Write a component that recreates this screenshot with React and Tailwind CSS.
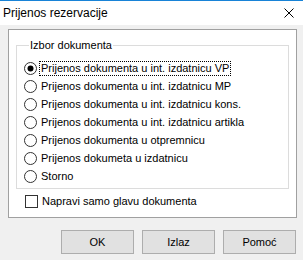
import React from "react";

const items = [
  "Prijenos dokumenta u int. izdatnicu VP",
  "Prijenos dokumenta u int. izdatnicu MP",
  "Prijenos dokumenta u int. izdatnicu kons.",
  "Prijenos dokumenta u int. izdatnicu artikla",
  "Prijenos dokumenta u otpremnicu",
  "Prijenos dokumeta u izdatnicu",
  "Storno",
];

function Radio({ checked }) {
  return (
    <svg width="13" height="13" viewBox="0 0 13 13" className="shrink-0">
      <circle cx="6.5" cy="6.5" r="6" fill="#fff" stroke="#333" strokeWidth="1" />
      {checked && <circle cx="6.5" cy="6.5" r="3" fill="#000" />}
    </svg>
  );
}

export default function App() {
  return (
    <div className="w-[303px] h-[260px] bg-[#f0f0f0] flex flex-col text-[11px] text-black [font-family:Tahoma,'Liberation_Sans',sans-serif] overflow-hidden">
      <div className="h-[25px] bg-white border-t border-[#1883d7] flex items-center justify-between pl-[3px] pr-[9px] shrink-0">
        <span className="text-[12px] [font-family:'Segoe_UI','Liberation_Sans',sans-serif]">Prijenos rezervacije</span>
        <svg width="10" height="10" viewBox="0 0 10 10">
          <path d="M0.5 0.5 L9.5 9.5 M9.5 0.5 L0.5 9.5" stroke="#000" strokeWidth="1" />
        </svg>
      </div>
      <div className="ml-[8px] mt-[4px] w-[289px] h-[189px] bg-white border border-[#a0a0a0] px-[7px] pt-[8px] flex flex-col">
        <fieldset className="border border-[#dcdcdc] h-[151px] px-[7px] pt-[7px]">
          <legend className="ml-[5px] px-[1px] leading-[14px]">Izbor dokumenta</legend>
          <div className="flex flex-col">
            {items.map((t, i) => (
              <div key={t} className="h-[18px] flex items-center gap-[3px]">
                <Radio checked={i === 0} />
                <span className={"leading-[13px] px-[1px] " + (i === 0 ? "outline outline-1 outline-dotted outline-black" : "")}>{t}</span>
              </div>
            ))}
          </div>
        </fieldset>
        <div className="flex items-center gap-[4px] mt-[6px] ml-[9px] h-[13px]">
          <div className="w-[13px] h-[13px] border border-[#333] bg-white shrink-0" />
          <span>Napravi samo glavu dokumenta</span>
        </div>
      </div>
      <div className="flex justify-end gap-[8px] pr-[7px] mt-[12px]">
        {["OK", "Izlaz", "Pomoć"].map((b) => (
          <button key={b} className="w-[73px] h-[24px] bg-[#e1e1e1] border border-[#adadad] text-[11px] text-black">{b}</button>
        ))}
      </div>
    </div>
  );
}
